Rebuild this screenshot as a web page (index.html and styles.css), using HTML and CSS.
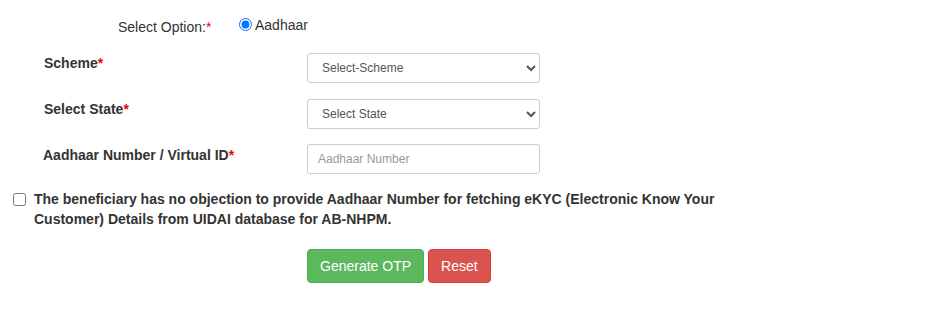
FILE: index.html
```html
<!DOCTYPE html>
<html>
<head>
<meta charset="utf-8">
<link rel="stylesheet" href="styles.css">
</head>
<body>
<form class="form">
  <div class="option-row">
    <span class="opt-label">Select Option:<span class="req">*</span></span>
    <label class="radio"><input type="radio" name="opt" checked> Aadhaar</label>
  </div>
  <div class="field">
    <label class="lbl">Scheme<span class="req">*</span></label>
    <select class="ctl"><option>Select-Scheme</option></select>
  </div>
  <div class="field">
    <label class="lbl">Select State<span class="req">*</span></label>
    <select class="ctl"><option>Select State</option></select>
  </div>
  <div class="field">
    <label class="lbl lbl-aadhaar">Aadhaar Number / Virtual ID<span class="req">*</span></label>
    <input class="ctl" type="text" placeholder="Aadhaar Number">
  </div>
  <div class="consent">
    <input type="checkbox" class="chk">
    <label class="consent-text">The beneficiary has no objection to provide Aadhaar Number for fetching eKYC (Electronic Know Your Customer) Details from UIDAI database for AB-NHPM.</label>
  </div>
  <div class="actions">
    <button type="button" class="btn btn-green">Generate OTP</button>
    <button type="button" class="btn btn-red">Reset</button>
  </div>
</form>
</body>
</html>
```
FILE: styles.css
```css
html, body {
  margin: 0;
  padding: 0;
  background: #fff;
}
body {
  font-family: "Liberation Sans", Arial, sans-serif;
  font-size: 14px;
  line-height: 20px;
  color: #333;
}
.form {
  display: flex;
  flex-direction: column;
}
.option-row {
  display: flex;
  align-items: center;
  padding-top: 17px;
  padding-left: 118px;
  height: 20px;
}
.opt-label {
  width: 121px;
}
.req {
  color: #e00;
}
.radio {
  display: flex;
  align-items: center;
  margin-top: -5px;
}
.radio input {
  margin: 0 3px 0 0;
  width: 13px;
  height: 13px;
}
.field {
  display: flex;
  align-items: flex-start;
  margin-top: 15.5px;
}
.option-row + .field {
  margin-top: 16px;
}
.lbl {
  width: 307px;
  flex: none;
  padding-left: 44px;
  box-sizing: border-box;
  font-weight: bold;
}
.lbl-aadhaar {
  padding-left: 43px;
  padding-top: 1px;
}
.ctl {
  width: 233px;
  height: 30px;
  box-sizing: border-box;
  border: 1px solid #ccc;
  border-radius: 3px;
  background: #fff;
  font-family: "Liberation Sans", Arial, sans-serif;
  font-size: 12px;
  color: #555;
  padding: 5px 10px;
  margin: 0;
}
select.ctl {
  padding: 5px 6px 5px 10px;
}
.ctl::placeholder {
  color: #999;
}
.consent {
  display: flex;
  align-items: flex-start;
  margin-top: 15px;
  padding-left: 13px;
}
.chk {
  margin: 4px 8px 0 0;
  width: 13px;
  height: 13px;
  flex: none;
}
.consent-text {
  width: 700px;
  font-weight: bold;
}
.actions {
  display: flex;
  gap: 4px;
  margin-top: 20px;
  padding-left: 307px;
}
.btn {
  font-family: "Liberation Sans", Arial, sans-serif;
  font-size: 14px;
  line-height: 20px;
  padding: 6px 12px;
  border-radius: 4px;
  border: 1px solid transparent;
  color: #fff;
  cursor: pointer;
}
.btn-green {
  background: #5cb85c;
  border-color: #4cae4c;
}
.btn-red {
  background: #d9534f;
  border-color: #d43f3a;
}
```
